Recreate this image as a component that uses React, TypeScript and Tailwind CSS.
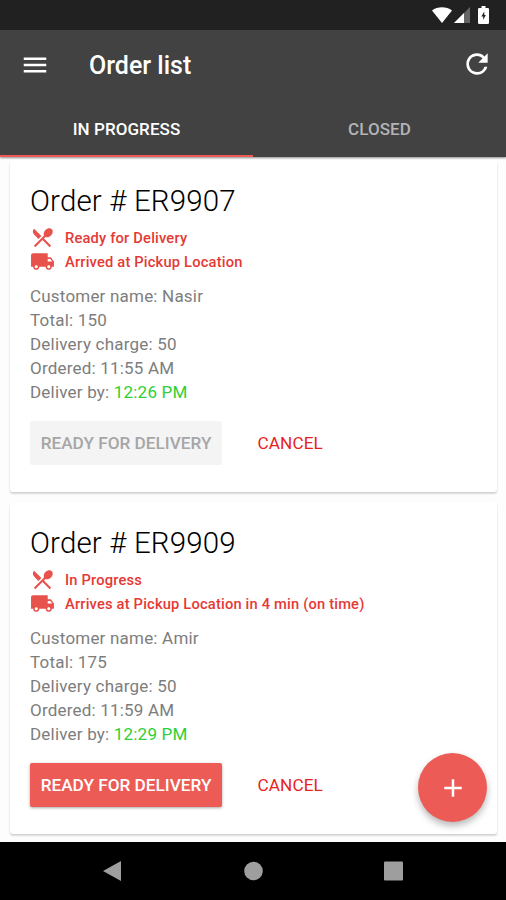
import { MdAdd, MdLocalShipping, MdMenu, MdRefresh, MdRestaurantMenu } from "react-icons/md";

interface Order {
  id: string;
  kitchenStatus: string;
  courierStatus: string;
  customer: string;
  total: number;
  deliveryCharge: number;
  orderedAt: string;
  deliverBy: string;
  ready: boolean;
}

const orders: Order[] = [
  {
    id: "ER9907",
    kitchenStatus: "Ready for Delivery",
    courierStatus: "Arrived at Pickup Location",
    customer: "Nasir",
    total: 150,
    deliveryCharge: 50,
    orderedAt: "11:55 AM",
    deliverBy: "12:26 PM",
    ready: true,
  },
  {
    id: "ER9909",
    kitchenStatus: "In Progress",
    courierStatus: "Arrives at Pickup Location in 4 min (on time)",
    customer: "Amir",
    total: 175,
    deliveryCharge: 50,
    orderedAt: "11:59 AM",
    deliverBy: "12:29 PM",
    ready: false,
  },
];

function StatusBar() {
  return (
    <div className="flex h-[30px] shrink-0 items-center justify-end bg-[#212121] pr-[17px] text-white">
      <svg className="mr-[2px] h-4 w-5" viewBox="0 0 20 16" fill="currentColor" aria-hidden>
        <path d="M10 16 0 3.500C5.500-.7 14.500-.7 20 3.500Z" />
      </svg>
      <svg className="mr-2 h-4 w-4" viewBox="0 0 16 16" fill="currentColor" aria-hidden>
        <path d="M16 0v16H0Z" opacity="0.3" />
        <path d="M10 6v10H0Z" />
      </svg>
      <svg className="h-[18px] w-[11px]" viewBox="0 0 11 18" aria-hidden>
        <path
          d="M3.500 0h4v2H9.500A1.300 1.300 0 0 1 11 3.300v13.400A1.300 1.300 0 0 1 9.700 18H1.300A1.300 1.300 0 0 1 0 16.700V3.300A1.300 1.300 0 0 1 1.300 2h2.200Z"
          fill="#fff"
        />
        <path d="M6.300 5.500 3.300 10.500h1.900v3.500L7.800 9H6.300Z" fill="#212121" />
      </svg>
    </div>
  );
}

function AppBar() {
  return (
    <header className="z-10 flex h-[127px] shrink-0 flex-col bg-[#424242] text-white shadow-[0_1px_2px_rgba(0,0,0,0.45)]">
      <div className="flex h-[70px] items-center pr-[13px] pl-5">
        <MdMenu className="size-[30px]" aria-label="Menu" />
        <h1 className="ml-[39px] flex-1 pt-[2px] text-[25px] font-medium">Order list</h1>
        <MdRefresh className="mb-[2px] size-[32px]" aria-label="Refresh" />
      </div>
      <div className="flex flex-1 text-[17px] font-medium tracking-[0.07px]">
        <button className="flex-1 border-b-2 border-[#ee5a55] pt-1">IN PROGRESS</button>
        <button className="flex-1 border-b-2 border-transparent pt-1 text-[#b4b4b4]">
          CLOSED
        </button>
      </div>
    </header>
  );
}

function OrderCard({ order }: { order: Order }) {
  return (
    <article className="h-[332px] shrink-0 rounded-[3px] bg-white px-5 pt-[21px] shadow-[0_2px_2px_rgba(0,0,0,0.12),0_1px_2px_rgba(0,0,0,0.08)]">
      <h2 className="text-[29.5px] leading-10 font-light tracking-[0.14px] text-black">
        Order # {order.id}
      </h2>
      <div className="mt-1 text-[14.7px] font-medium tracking-[0.18px] text-[#e53935]">
        <div className="flex h-[24.5px] items-center gap-[10px]">
          <MdRestaurantMenu className="size-[25px] text-[#e8524c]" aria-hidden />
          <span className="pt-[1px]">{order.kitchenStatus}</span>
        </div>
        <div className="flex h-[24.5px] items-center gap-[10px]">
          <MdLocalShipping className="size-[25px] text-[#e8524c]" aria-hidden />
          <span className="pt-[1px]">{order.courierStatus}</span>
        </div>
      </div>
      <div className="mt-[10px] text-[17px] leading-6 tracking-[0.2px] text-[#7d7d7d]">
        <p>Customer name: {order.customer}</p>
        <p>Total: {order.total}</p>
        <p>Delivery charge: {order.deliveryCharge}</p>
        <p>Ordered: {order.orderedAt}</p>
        <p>
          Deliver by: <span className="text-[#2fcf35]">{order.deliverBy}</span>
        </p>
      </div>
      <div className="mt-[17px] flex items-center text-[17.2px]">
        {order.ready ? (
          <button
            className="h-[44px] w-[192px] rounded-[2px] bg-[#f4f4f4] pt-[1px] font-medium text-[#a6a6a6]"
            disabled
          >
            READY FOR DELIVERY
          </button>
        ) : (
          <button className="h-[44px] w-[192px] rounded-[2px] bg-[#ec5b56] pt-[1px] font-medium text-white shadow-[0_1px_3px_rgba(0,0,0,0.35)]">
            READY FOR DELIVERY
          </button>
        )}
        <button className="ml-[35.5px] pt-[1px] tracking-[0.1px] text-[#e8231c]">CANCEL</button>
      </div>
    </article>
  );
}

function NavigationBar() {
  return (
    <nav className="flex h-[58px] shrink-0 items-center justify-center bg-black text-[#9e9e9e]">
      <svg className="h-5 w-[300px]" viewBox="0 0 300 20" fill="currentColor" aria-hidden>
        <path d="M0 10 18 0v20Z" />
        <circle cx="150.500" cy="10" r="9.300" />
        <rect x="281" y="0.500" width="19" height="19" rx="1" />
      </svg>
    </nav>
  );
}

export default function App() {
  return (
    <div className="flex h-[900px] w-[506px] flex-col overflow-hidden bg-[#fdfdfd] font-['Roboto',sans-serif]">
      <StatusBar />
      <AppBar />
      <main className="relative flex flex-1 flex-col gap-[10px] overflow-hidden px-[10px] pt-[3px] pr-[9px]">
        {orders.map((order) => (
          <OrderCard key={order.id} order={order} />
        ))}
        <button
          className="absolute right-[19px] bottom-[20px] flex size-[69px] items-center justify-center rounded-full bg-[#ec5b56] text-white shadow-[0_4px_7px_rgba(0,0,0,0.28)]"
          aria-label="Add order"
        >
          <MdAdd className="size-[30px]" />
        </button>
      </main>
      <NavigationBar />
    </div>
  );
}
